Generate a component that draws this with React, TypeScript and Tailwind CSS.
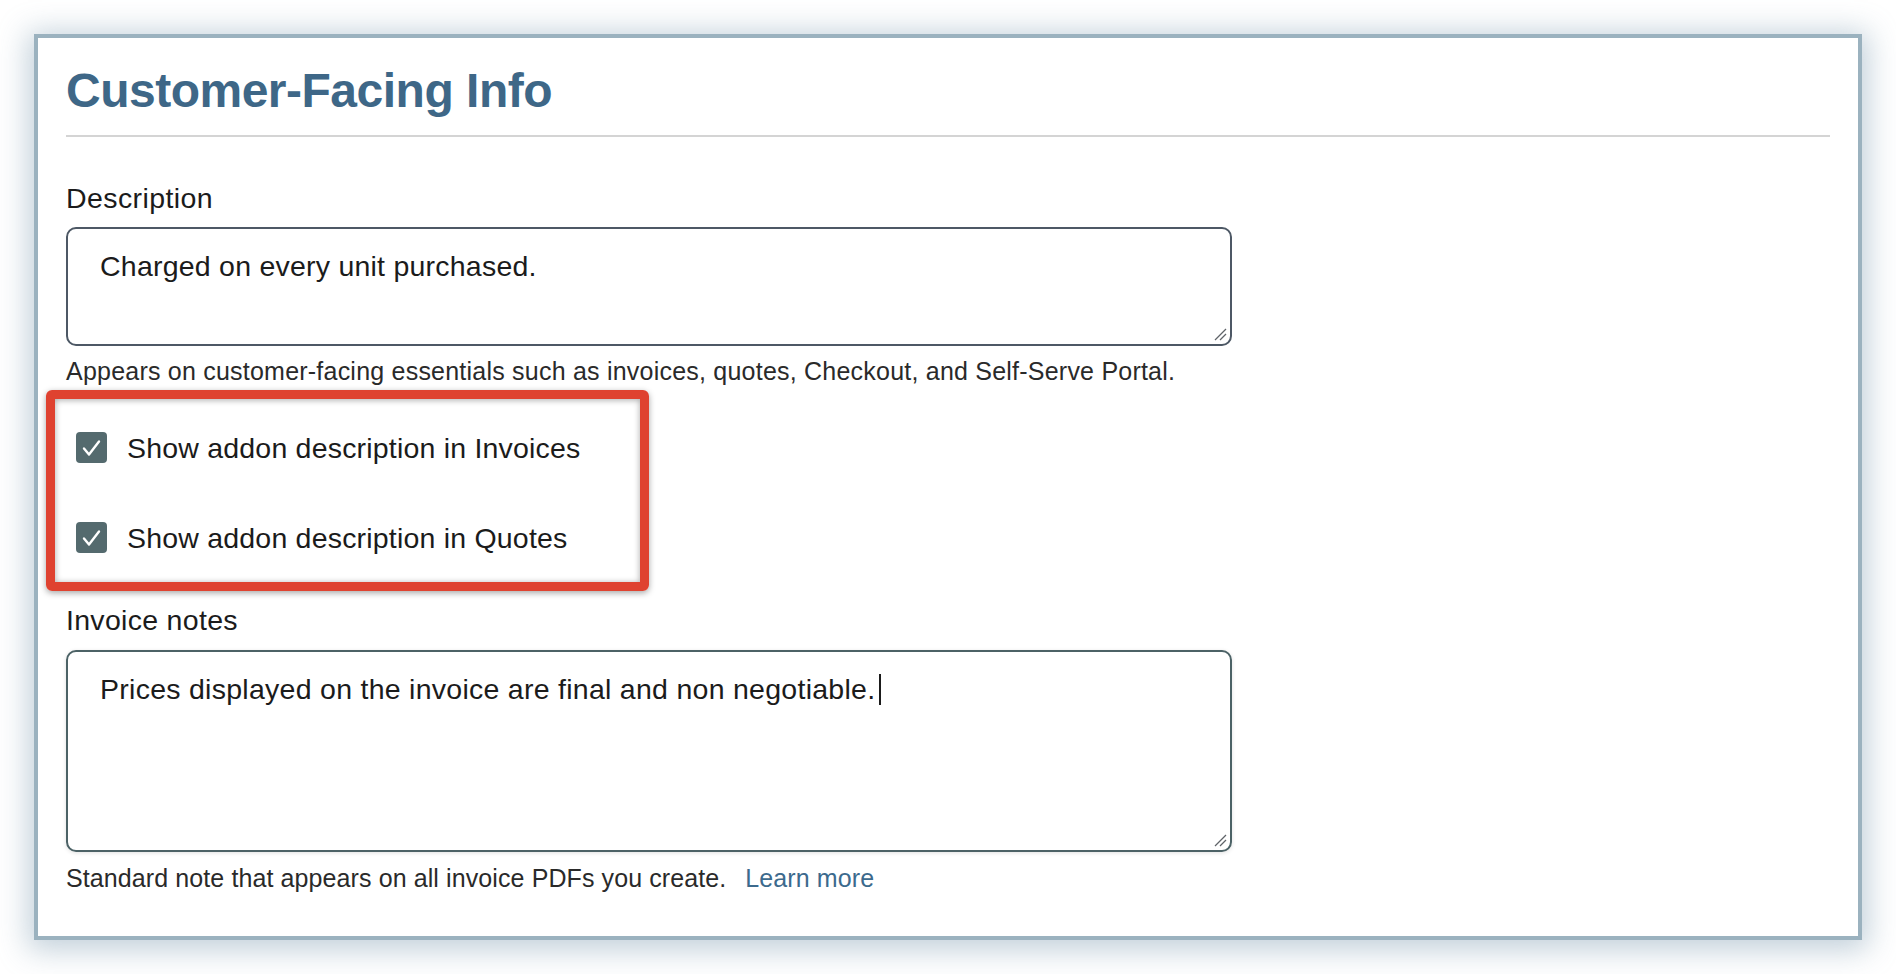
import React from "react";

const font = { fontFamily: '"Liberation Sans", Arial, Helvetica, sans-serif' };

function Grip() {
  return (
    <svg
      className="absolute right-[3px] bottom-[3px]"
      width="14"
      height="14"
      viewBox="0 0 14 14"
    >
      <line x1="2" y1="13" x2="13" y2="2" stroke="#5f6368" strokeWidth="1.3" />
      <line x1="7" y1="13" x2="13" y2="7" stroke="#5f6368" strokeWidth="1.3" />
    </svg>
  );
}

function Check({ label }: { label: string }) {
  return (
    <div className="flex h-[31px] items-center">
      <div className="ml-[10px] flex h-[31px] w-[31px] items-center justify-center rounded-[4px] bg-[#546a6e]">
        <svg width="31" height="31" viewBox="0 0 31 31">
          <path
            d="M8 16.5 L13 22.5 L23 9.5"
            fill="none"
            stroke="#ffffff"
            strokeWidth="2.4"
            strokeLinecap="round"
            strokeLinejoin="round"
          />
        </svg>
      </div>
      <span className="ml-[20px] text-[28.5px] leading-[32px] tracking-[0.2px] text-[#1b1b1b]">{label}</span>
    </div>
  );
}

export default function App() {
  return (
    <div className="h-[974px] w-[1896px] bg-white pl-[34px] pt-[34px]" style={font}>
      <div className="h-[906px] w-[1828px] border-4 border-[#9bb2bf] bg-white px-[28px] shadow-[0_4px_28px_6px_rgba(120,150,172,0.45)]">
        <h1 className="mt-[29px] text-[48px] font-bold leading-[48px] tracking-[-0.5px] text-[#3e6787]">
          Customer-Facing Info
        </h1>
        <div className="mt-[20px] h-[2px] w-full bg-[#d4d4d4]" />

        <div className="mt-[45px] text-[28.5px] leading-[32px] tracking-[0.4px] text-[#1b1b1b]">Description</div>
        <div className="relative mt-[13px] h-[119px] w-[1166px] rounded-[10px] border-2 border-[#4d5865] pl-[32px] pt-[20px]">
          <div className="text-[28.5px] leading-[34px] tracking-[0.23px] text-[#1b1b1b]">Charged on every unit purchased.</div>
          <Grip />
        </div>
        <div className="mt-[10px] text-[25px] leading-[30px] tracking-[0.22px] text-[#2a2a2a]">
          Appears on customer-facing essentials such as invoices, quotes, Checkout, and Self-Serve Portal.
        </div>

        <div className="relative mt-[46px] flex flex-col gap-[59px]">
          <Check label="Show addon description in Invoices" />
          <Check label="Show addon description in Quotes" />
          <div className="pointer-events-none absolute left-[-20px] top-[-42px] h-[201px] w-[603px] rounded-[6px] border-[9px] border-[#df4230] shadow-[0_2px_6px_rgba(0,0,0,0.35),inset_0_1px_6px_rgba(0,0,0,0.35)]" />
        </div>

        <div className="mt-[51px] text-[28.5px] leading-[32px] tracking-[0.3px] text-[#1b1b1b]">Invoice notes</div>
        <div className="relative mt-[14px] h-[202px] w-[1166px] rounded-[10px] border-2 border-[#4c6266] pl-[32px] pt-[20px] shadow-[0_1px_4px_rgba(0,0,0,0.12)]">
          <div className="flex items-center text-[28.5px] leading-[34px] tracking-[0.27px] text-[#1b1b1b]">
            <span>Prices displayed on the invoice are final and non negotiable.</span>
            <span className="ml-[4px] inline-block h-[31px] w-[2px] bg-[#1b1b1b]" />
          </div>
          <Grip />
        </div>
        <div className="mt-[11px] text-[25px] leading-[30px] tracking-[0.1px] text-[#2a2a2a]">
          Standard note that appears on all invoice PDFs you create.
          <span className="ml-[19px] text-[#3c6a8d]">Learn more</span>
        </div>
      </div>
    </div>
  );
}
